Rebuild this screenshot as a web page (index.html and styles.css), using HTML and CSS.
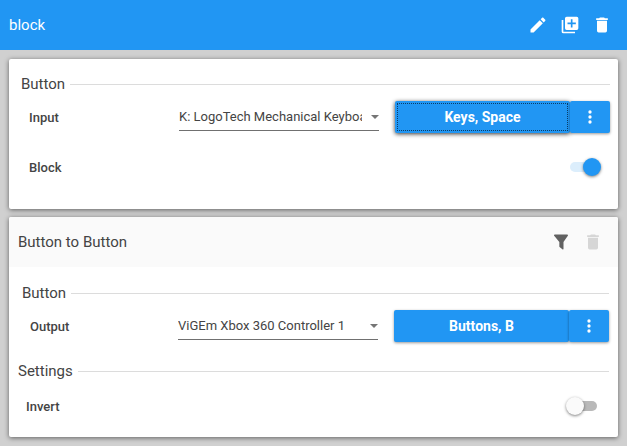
FILE: index.html
```html
<!DOCTYPE html>
<html lang="en">
<head>
  <meta charset="UTF-8" />
  <meta name="viewport" content="width=device-width, initial-scale=1.0"/>
  <title>block</title>
  <link rel="stylesheet" href="styles.css">
</head>
<body>

  <header class="app-bar">
    <h1>block</h1>
    <div class="actions">
      <button class="icon-btn" aria-label="Edit">
        <svg viewBox="0 0 24 24"><path d="M20.71 7.04c.39-.39.39-1.04 0-1.41l-2.34-2.34c-.37-.39-1.02-.39-1.41 0l-1.84 1.83 3.75 3.75M3 17.25V21h3.75L17.81 9.93l-3.75-3.75L3 17.25z"/></svg>
      </button>
      <button class="icon-btn" aria-label="Duplicate">
        <svg viewBox="0 0 24 24"><path d="M4 6H2v14a2 2 0 0 0 2 2h14v-2H4V6zm16-4H8a2 2 0 0 0-2 2v12a2 2 0 0 0 2 2h12a2 2 0 0 0 2-2V4a2 2 0 0 0-2-2zm-1 9h-4v4h-2v-4H9V9h4V5h2v4h4v2z"/></svg>
      </button>
      <button class="icon-btn" aria-label="Delete">
        <svg viewBox="0 0 24 24"><path d="M19 4h-3.5l-1-1h-5l-1 1H5v2h14M6 19a2 2 0 0 0 2 2h8a2 2 0 0 0 2-2V7H6v12z"/></svg>
      </button>
    </div>
  </header>

  <main class="content">
    <section class="card">
      <div class="card-body">
        <div class="group">
          <h3 class="group-title">Button</h3>
          <div class="row">
            <label for="inputDevice">Input</label>
            <div class="select-box">
              <select id="inputDevice">
                <option>K: LogoTech Mechanical Keyboard</option>
              </select>
            </div>
            <div class="split-button">
              <button class="bind-btn focused">Keys, Space</button>
              <button class="menu-btn" aria-label="More">
                <svg viewBox="0 0 24 24"><path d="M12 16a2 2 0 1 1 0 4 2 2 0 0 1 0-4m0-6a2 2 0 1 1 0 4 2 2 0 0 1 0-4m0-6a2 2 0 1 1 0 4 2 2 0 0 1 0-4z"/></svg>
              </button>
            </div>
          </div>
          <div class="row">
            <label for="block">Block</label>
            <input type="checkbox" class="switch" id="block" checked>
          </div>
        </div>
      </div>
    </section>

    <section class="card">
      <div class="card-header">
        <h2>Button to Button</h2>
        <div class="actions">
          <button class="icon-btn" aria-label="Filter">
            <svg viewBox="0 0 24 24"><path d="M15 12v8.5c0 .5-.6.8-1 .4L10.300 18a1 1 0 0 1-.3-.7V12L3.800 4.600C3.300 4 3.700 3 4.500 3h15c.8 0 1.200 1 .7 1.600L15 12z"/></svg>
          </button>
          <button class="icon-btn" aria-label="Delete" disabled>
            <svg viewBox="0 0 24 24"><path d="M19 4h-3.500l-1-1h-5l-1 1H5v2h14M6 19a2 2 0 0 0 2 2h8a2 2 0 0 0 2-2V7H6v12z"/></svg>
          </button>
        </div>
      </div>
      <div class="card-body">
        <div class="group">
          <h3 class="group-title">Button</h3>
          <div class="row">
            <label for="outputDevice">Output</label>
            <div class="select-box">
              <select id="outputDevice">
                <option>ViGEm Xbox 360 Controller 1</option>
              </select>
            </div>
            <div class="split-button">
              <button class="bind-btn">Buttons, B</button>
              <button class="menu-btn" aria-label="More">
                <svg viewBox="0 0 24 24"><path d="M12 16a2 2 0 1 1 0 4 2 2 0 0 1 0-4m0-6a2 2 0 1 1 0 4 2 2 0 0 1 0-4m0-6a2 2 0 1 1 0 4 2 2 0 0 1 0-4z"/></svg>
              </button>
            </div>
          </div>
        </div>
        <div class="group settings">
          <h3 class="group-title">Settings</h3>
          <div class="row">
            <label for="invert">Invert</label>
            <input type="checkbox" class="switch" id="invert">
          </div>
        </div>
      </div>
    </section>
  </main>

</body>
</html>
```
FILE: styles.css
```css
* {
  box-sizing: border-box;
}

body {
  margin: 0;
  font-family: Roboto, sans-serif;
  font-size: 13px;
  color: #444;
  background: #d0d0d0;
}

h1, h2, h3 {
  margin: 0;
  font-size: 15px;
  font-weight: 400;
}

button {
  border: none;
  padding: 0;
  font-family: inherit;
  cursor: pointer;
}

svg {
  display: block;
  width: 20px;
  height: 20px;
  fill: currentColor;
}

.app-bar {
  display: flex;
  align-items: center;
  justify-content: space-between;
  height: 50px;
  padding: 0 9px;
  background: #2196f3;
  color: white;
}

.actions {
  display: flex;
}

.icon-btn {
  display: flex;
  align-items: center;
  justify-content: center;
  width: 32px;
  height: 32px;
  background: transparent;
  color: inherit;
}

.icon-btn:disabled {
  color: #d6d6d6;
  cursor: default;
}

.content {
  display: flex;
  flex-direction: column;
  gap: 8px;
  padding: 9px;
}

.card {
  background: white;
  border-radius: 2px;
  box-shadow: 0 1px 5px rgba(0, 0, 0, 0.55);
}

.card-header {
  display: flex;
  align-items: center;
  justify-content: space-between;
  height: 50px;
  padding: 0 9px;
  background: #fafafa;
  border-radius: 2px 2px 0 0;
}

.card-header .icon-btn:not(:disabled) {
  color: #616161;
}

.card-body {
  padding: 16px 8px 18px 12px;
}

.card-header + .card-body {
  padding: 17px 9px 7px 13px;
}

.group-title {
  display: flex;
  align-items: center;
  gap: 5px;
  line-height: 18px;
}

.group-title::after {
  content: "";
  flex: 1;
  height: 1px;
  background: #dcdcdc;
}

.row {
  display: flex;
  align-items: center;
  height: 48px;
  padding-left: 8px;
}

.row + .row,
.settings .row {
  margin-top: 2px;
}

.row label {
  flex: 1;
  font-weight: 500;
}

.settings {
  margin: 12px 0 0 -4px;
}

.select-box {
  position: relative;
  width: 200px;
  margin-right: 16px;
}

.select-box::after {
  content: "";
  position: absolute;
  right: 0;
  top: 12px;
  border: 4px solid transparent;
  border-top-color: #757575;
  border-bottom: none;
  pointer-events: none;
}

select {
  display: block;
  appearance: none;
  width: 100%;
  height: 28px;
  padding: 0 17px 0 0;
  border: none;
  border-bottom: 1px solid #707070;
  border-radius: 0;
  background: transparent;
  color: inherit;
  font-family: inherit;
  font-size: 13px;
}

.split-button {
  display: flex;
  width: 215px;
}

.bind-btn,
.menu-btn {
  height: 32px;
  border-radius: 2px;
  background: #2196f3;
  color: white;
  box-shadow: 0 1px 3px rgba(0, 0, 0, 0.4);
}

.bind-btn {
  flex: 1;
  font-size: 14px;
  font-weight: 700;
}

.bind-btn.focused {
  outline: 1px dotted #0b3c66;
  outline-offset: -3px;
  box-shadow: 0 1px 4px rgba(0, 0, 0, 0.8);
}

.menu-btn {
  display: flex;
  align-items: center;
  justify-content: center;
  width: 40px;
}

.switch {
  appearance: none;
  display: flex;
  align-items: center;
  width: 34px;
  height: 20px;
  margin: 0 9px 0 0;
  padding: 0 3px;
  position: relative;
  cursor: pointer;
}

/* track */
.switch::before {
  content: "";
  flex: 1;
  height: 10px;
  border-radius: 5px;
  background: #b9b9b9;
}

/* thumb */
.switch::after {
  content: "";
  position: absolute;
  left: 0;
  top: 1px;
  width: 18px;
  height: 18px;
  border-radius: 50%;
  background: #fafafa;
  box-shadow: 0 1px 3px rgba(0, 0, 0, 0.5);
}

.switch:checked::before {
  background: #dceefc;
}

.switch:checked::after {
  left: auto;
  right: 0;
  background: #2196f3;
}
```
